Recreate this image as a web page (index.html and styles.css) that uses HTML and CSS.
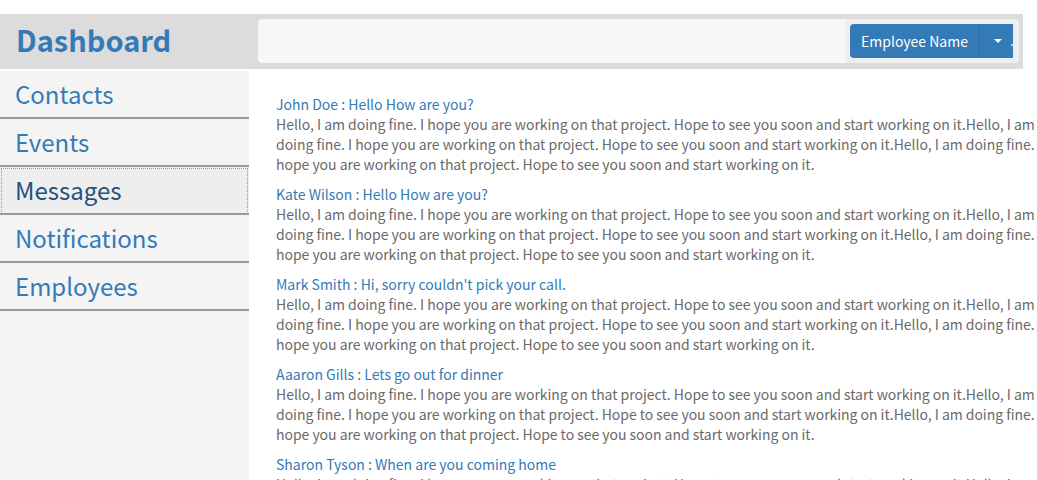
FILE: index.html
```html
<!DOCTYPE html>
<html>
<head>
<meta charset="utf-8">
<link rel="stylesheet" href="styles.css">
</head>
<body>
<div class="page">
  <header class="topbar">
    <div class="brand">Dashboard</div>
    <div class="search">
      <div class="search-input"></div>
      <div class="search-btns">
        <div class="btn-group">
          <span class="btn-main">Employee Name</span>
          <span class="btn-caret"><span class="caret"></span><span class="dot">.</span></span>
        </div>
      </div>
    </div>
  </header>
  <div class="body">
    <nav class="sidebar">
      <a class="nav-item">Contacts</a>
      <a class="nav-item">Events</a>
      <a class="nav-item active">Messages</a>
      <a class="nav-item">Notifications</a>
      <a class="nav-item">Employees</a>
    </nav>
    <main class="content">
      <div class="msg">
        <div class="msg-title">John Doe : Hello How are you?</div>
        <div class="msg-text">Hello, I am doing fine. I hope you are working on that project. Hope to see you soon and start working on it.Hello, I am doing fine. I hope you are working on that project. Hope to see you soon and start working on it.Hello, I am doing fine. I hope you are working on that project. Hope to see you soon and start working on it.</div>
      </div>
      <div class="msg">
        <div class="msg-title">Kate Wilson : Hello How are you?</div>
        <div class="msg-text">Hello, I am doing fine. I hope you are working on that project. Hope to see you soon and start working on it.Hello, I am doing fine. I hope you are working on that project. Hope to see you soon and start working on it.Hello, I am doing fine. I hope you are working on that project. Hope to see you soon and start working on it.</div>
      </div>
      <div class="msg">
        <div class="msg-title">Mark Smith : Hi, sorry couldn't pick your call.</div>
        <div class="msg-text">Hello, I am doing fine. I hope you are working on that project. Hope to see you soon and start working on it.Hello, I am doing fine. I hope you are working on that project. Hope to see you soon and start working on it.Hello, I am doing fine. I hope you are working on that project. Hope to see you soon and start working on it.</div>
      </div>
      <div class="msg">
        <div class="msg-title">Aaaron Gills : Lets go out for dinner</div>
        <div class="msg-text">Hello, I am doing fine. I hope you are working on that project. Hope to see you soon and start working on it.Hello, I am doing fine. I hope you are working on that project. Hope to see you soon and start working on it.Hello, I am doing fine. I hope you are working on that project. Hope to see you soon and start working on it.</div>
      </div>
      <div class="msg">
        <div class="msg-title">Sharon Tyson : When are you coming home</div>
        <div class="msg-text">Hello, I am doing fine. I hope you are working on that project. Hope to see you soon and start working on it.Hello, I am doing fine. I hope you are working on that project. Hope to see you soon and start working on it.Hello, I am doing fine. I hope you are working on that project. Hope to see you soon and start working on it.</div>
      </div>
    </main>
  </div>
</div>
</body>
</html>
```
FILE: styles.css
```css
html, body {
  margin: 0;
  padding: 0;
  background: #fff;
  overflow: hidden;
}
body {
  font-family: "Noto Sans CJK JP", "Noto Sans", sans-serif;
  font-size: 14px;
  line-height: 20px;
  color: #666;
}
.page {
  width: 1037px;
  height: 480px;
  padding-top: 14px;
  box-sizing: border-box;
  display: flex;
  flex-direction: column;
}
.topbar {
  width: 1023px;
  height: 55px;
  background: #dcdcdc;
  display: flex;
  align-items: flex-start;
  flex-shrink: 0;
}
.brand {
  width: 242px;
  padding-left: 16px;
  font-size: 29px;
  line-height: 50px;
  font-weight: bold;
  color: #337ab7;
}
.search {
  margin-top: 5px;
  width: 761px;
  height: 44px;
  display: flex;
  border-radius: 4px;
  overflow: hidden;
}
.search-input {
  flex: 1;
  background: #f7f7f7;
  border-radius: 4px 0 0 4px;
}
.search-btns {
  width: 174px;
  background: #eeeeee;
  padding: 5px 6px 5px 5px;
  box-sizing: border-box;
}
.btn-group {
  display: flex;
  height: 34px;
  border-radius: 4px 0 0 4px;
  overflow: hidden;
  background: #337ab7;
}
.btn-main {
  width: 129px;
  border-right: 1px solid #2e6da4;
  color: #fff;
  font-size: 14px;
  line-height: 34px;
  text-align: center;
}
.btn-caret {
  flex: 1;
  display: flex;
  align-items: center;
  justify-content: flex-end;
  gap: 8px;
  color: #fff;
  overflow: hidden;
}
.caret {
  width: 0;
  height: 0;
  border-left: 4px solid transparent;
  border-right: 4px solid transparent;
  border-top: 4px solid #fff;
}
.dot {
  font-size: 12px;
  line-height: 12px;
  width: 3px;
  overflow: hidden;
}
.body {
  flex: 1;
  display: flex;
  margin-top: 2px;
}
.sidebar {
  width: 249px;
  background: #f4f4f4;
  display: flex;
  flex-direction: column;
  flex-shrink: 0;
}
.nav-item {
  display: block;
  height: 46px;
  line-height: 45px;
  padding-left: 15px;
  font-size: 24px;
  color: #337ab7;
  border-bottom: 2px solid #999;
}
.nav-item.active {
  color: #23527c;
  background: #eeeeee;
  outline: 1px dotted #999;
  outline-offset: -2px;
}
.content {
  flex: 1;
  margin-right: -13px;
  padding: 23px 0 0 27px;
}
.msg {
  margin-bottom: 10px;
}
.msg-title {
  color: #337ab7;
}
.msg-text {
  color: #6a6a6a;
  letter-spacing: -0.03px;
}
```
